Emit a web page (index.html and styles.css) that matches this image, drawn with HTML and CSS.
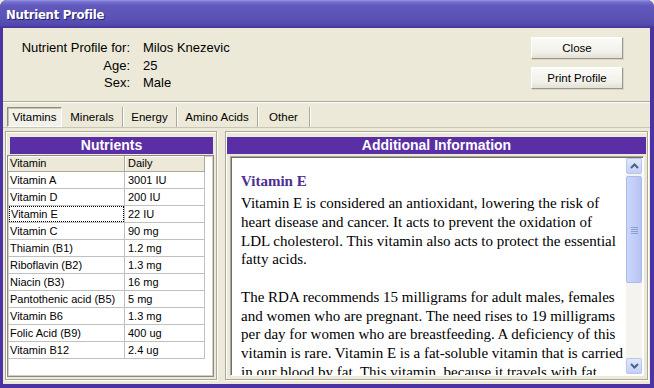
FILE: index.html
```html
<!DOCTYPE html>
<html lang="en">
<head>
  <meta charset="UTF-8" />
  <title>Nutrient Profile</title>
  <link rel="stylesheet" href="styles.css">
</head>
<body>
  <div class="window">
    <div class="titlebar">
      <span class="title">Nutrient Profile</span>
    </div>

    <div class="client">
      <div class="top">
        <dl class="info">
          <dt>Nutrient Profile for:</dt><dd>Milos Knezevic</dd>
          <dt>Age:</dt><dd>25</dd>
          <dt>Sex:</dt><dd>Male</dd>
        </dl>
        <div class="actions">
          <button class="btn">Close</button>
          <button class="btn">Print Profile</button>
        </div>
      </div>

      <div class="tabs">
        <span class="tab active" style="width:55px">Vitamins</span>
        <span class="tab" style="width:61px">Minerals</span>
        <span class="tab" style="width:54px">Energy</span>
        <span class="tab" style="width:81px">Amino Acids</span>
        <span class="tab" style="width:52px">Other</span>
      </div>

      <div class="panels">
        <section class="panel nutrients">
          <h2 class="bar">Nutrients</h2>
          <div class="grid">
            <table>
              <thead>
                <tr><th>Vitamin</th><th>Daily</th></tr>
              </thead>
              <tbody>
                <tr><td>Vitamin A</td><td>3001 IU</td></tr>
                <tr><td>Vitamin D</td><td>200 IU</td></tr>
                <tr><td class="focus"><span>Vitamin E</span></td><td>22 IU</td></tr>
                <tr><td>Vitamin C</td><td>90 mg</td></tr>
                <tr><td>Thiamin (B1)</td><td>1.2 mg</td></tr>
                <tr><td>Riboflavin (B2)</td><td>1.3 mg</td></tr>
                <tr><td>Niacin (B3)</td><td>16 mg</td></tr>
                <tr><td>Pantothenic acid (B5)</td><td>5 mg</td></tr>
                <tr><td>Vitamin B6</td><td>1.3 mg</td></tr>
                <tr><td>Folic Acid (B9)</td><td>400 ug</td></tr>
                <tr><td>Vitamin B12</td><td>2.4 ug</td></tr>
              </tbody>
            </table>
          </div>
        </section>

        <section class="panel details">
          <h2 class="bar">Additional Information</h2>
          <div class="textbox">
            <div class="text">
              <h3>Vitamin E</h3>
              <p>Vitamin E is considered an antioxidant, lowering the risk of<br>
                heart disease and cancer. It acts to prevent the oxidation of<br>
                LDL cholesterol. This vitamin also acts to protect the essential<br>
                fatty acids.</p>
              <p>The RDA recommends 15 milligrams for adult males, females<br>
                and women who are pregnant. The need rises to 19 milligrams<br>
                per day for women who are breastfeeding. A deficiency of this<br>
                vitamin is rare. Vitamin E is a fat-soluble vitamin that is carried<br>
                in our blood by fat. This vitamin, because it travels with fat</p>
            </div>
            <div class="scrollbar">
              <span class="arrow">
                <svg width="9" height="6" viewBox="0 0 9 6"><path d="M1 5 L4.5 1.5 L8 5" fill="none" stroke="#4d6185" stroke-width="2"/></svg>
              </span>
              <span class="track">
                <span class="thumb">
                  <svg width="7" height="8" viewBox="0 0 7 8"><path d="M0 1.5 H7 M0 3.5 H7 M0 5.5 H7 M0 7.5 H7" stroke="#8c9dd6" stroke-width="1"/></svg>
                </span>
              </span>
              <span class="arrow">
                <svg width="9" height="6" viewBox="0 0 9 6"><path d="M1 1 L4.5 4.5 L8 1" fill="none" stroke="#4d6185" stroke-width="2"/></svg>
              </span>
            </div>
          </div>
        </section>
      </div>
    </div>
  </div>
</body>
</html>
```

FILE: styles.css
```css
body {
  margin: 0;
  font-family: 'Liberation Sans', Arial, sans-serif;
  font-size: 11px;
  color: #000;
  background: #ece9d8;
}

.window {
  width: 654px;
  height: 388px;
  display: flex;
  flex-direction: column;
  background: #4b33a3;
  border-radius: 7px 7px 0 0;
  overflow: hidden;
}

.titlebar {
  height: 28px;
  flex: none;
  display: flex;
  align-items: center;
  padding-left: 6px;
  background: linear-gradient(#9a96e6 0, #7570d0 2px, #6058bb 6px, #5b52b6 18px, #5349ad 25px, #42309a 28px);
}

.title {
  color: #fff;
  font-family: 'DejaVu Sans Condensed', 'Liberation Sans', sans-serif;
  font-weight: bold;
  font-size: 13px;
  letter-spacing: -0.3px;
  text-shadow: 1px 1px 0 #2a1d6e;
}

.client {
  flex: 1;
  min-height: 0;
  margin: 0 4px 4px 3px;
  background: #ece9d8;
  display: flex;
  flex-direction: column;
}

/* header: who the profile is for + buttons */
.top {
  height: 73px;
  flex: none;
  display: flex;
  justify-content: space-between;
  border-bottom: 1px solid #aca899;
}

.info {
  margin: 0;
  padding-top: 11px;
  display: grid;
  grid-template-columns: 127px auto;
  column-gap: 13px;
  align-content: start;
  font-size: 13px;
  line-height: 17.5px;
}

.info dt {
  text-align: right;
}

.info dd {
  margin: 0;
}

.actions {
  display: flex;
  flex-direction: column;
  gap: 8px;
  padding: 9px 27px 0 0;
}

.btn {
  width: 92px;
  height: 22px;
  padding: 0;
  font-family: 'Liberation Sans', Arial, sans-serif;
  font-size: 11.5px;
  color: #000;
  background: linear-gradient(#fbfbf8, #f1f0ea 70%, #e3e0d4);
  border: 1px solid;
  border-color: #fff #9b988a #9b988a #fff;
  box-shadow: 1px 1px 0 #d8d5c8;
}

/* tab strip */
.tabs {
  display: flex;
  flex: none;
  height: 20px;
  padding: 4px 0 0 4px;
  border-top: 1px solid #fff;
  border-bottom: 1px solid #c9c6b8;
  font-size: 11.5px;
}

.tab {
  box-sizing: border-box;
  display: flex;
  align-items: center;
  justify-content: center;
  height: 20px;
  border-right: 1px solid #aca899;
  box-shadow: 1px 0 0 #fff;
}

.tab.active {
  border: 1px solid;
  border-color: #8f8c7f #fff #fff #8f8c7f;
  box-shadow: inset 1px 1px 0 #c5c2b2;
  background: #f2f1ea;
}

/* two panels */
.panels {
  flex: 1;
  min-height: 0;
  display: flex;
  gap: 8px;
  padding: 3px 2px 4px 2px;
}

.panel {
  box-sizing: border-box;
  min-height: 0;
  display: flex;
  flex-direction: column;
  border: 1px solid #aca899;
  box-shadow: inset 1px 1px 0 #fff, 1px 1px 0 #fff;
}

.nutrients {
  width: 212px;
  padding: 5px 2px 2px 1px;
}

.details {
  width: 423px;
  padding: 5px 1px 3px 1px;
}

.bar {
  margin: 0;
  height: 17px;
  flex: none;
  background: #5a2ea4;
  color: #fff;
  font-size: 14px;
  font-weight: bold;
  line-height: 17px;
  text-align: center;
}

.nutrients .bar {
  margin: 0 1px 0 3px;
}

/* the grid */
.grid {
  flex: 1;
  min-height: 0;
  margin-top: 1px;
  background: #fff;
  border: 1px solid #8d8a7d;
  box-shadow: inset 0 0 0 1px #d4d0c8;
}

.grid table {
  border-collapse: collapse;
  width: 197px;
  table-layout: fixed;
}

.grid th,
.grid td {
  height: 16px;
  padding: 0 0 0 2px;
  border-right: 1px solid #c0c0c0;
  border-bottom: 1px solid #c0c0c0;
  text-align: left;
  font-weight: normal;
  white-space: nowrap;
  line-height: 16px;
}

.grid th {
  height: 15px;
  line-height: 15px;
  background: #ece9d8;
  border-right-color: #aca899;
  border-bottom-color: #aca899;
  box-shadow: inset 1px 1px 0 #fff;
}

.grid th:first-child,
.grid td:first-child {
  width: 114px;
}

.grid th + th,
.grid td + td {
  padding-left: 3px;
}

.grid td.focus span {
  display: inline-block;
  margin-left: -1px;
  padding-left: 1px;
  width: 112px;
  height: 14px;
  line-height: 14px;
  border: 1px dotted #000;
}

/* text box with its scrollbar */
.textbox {
  flex: 1;
  min-height: 0;
  display: flex;
  margin: 2px 2px 0 3px;
  background: #fff;
  border: 1px solid;
  border-color: #aca899 #fff #fff #aca899;
  box-shadow: inset 1px 1px 0 #716f64;
  overflow: hidden;
}

.text {
  flex: 1;
  min-width: 0;
  padding: 15px 0 0 10px;
  font-family: 'Liberation Serif', 'Times New Roman', serif;
  font-size: 15px;
  line-height: 18.75px;
  white-space: nowrap;
  overflow: hidden;
}

.text h3 {
  margin: 0 0 4px;
  font-size: 15px;
  line-height: 18px;
  color: #4d2e91;
}

.text p {
  margin: 0 0 18.75px;
}

.scrollbar {
  width: 16px;
  flex: none;
  margin: 1px 1px 1px 0;
  display: flex;
  flex-direction: column;
  background: #f4f3ee;
}

.arrow {
  height: 16px;
  flex: none;
  display: flex;
  align-items: center;
  justify-content: center;
  box-sizing: border-box;
  border: 1px solid #b8c6f2;
  border-radius: 2px;
  background: linear-gradient(#e1e8fd, #c3cff5);
}

.track {
  flex: 1;
  padding: 2px 0 75px;
  display: flex;
}

.thumb {
  flex: 1;
  display: flex;
  align-items: center;
  justify-content: center;
  box-sizing: border-box;
  border: 1px solid #aab9ee;
  border-radius: 2px;
  background: linear-gradient(90deg, #cbd6fb, #c0ccf6 60%, #b6c3f0);
}
```
